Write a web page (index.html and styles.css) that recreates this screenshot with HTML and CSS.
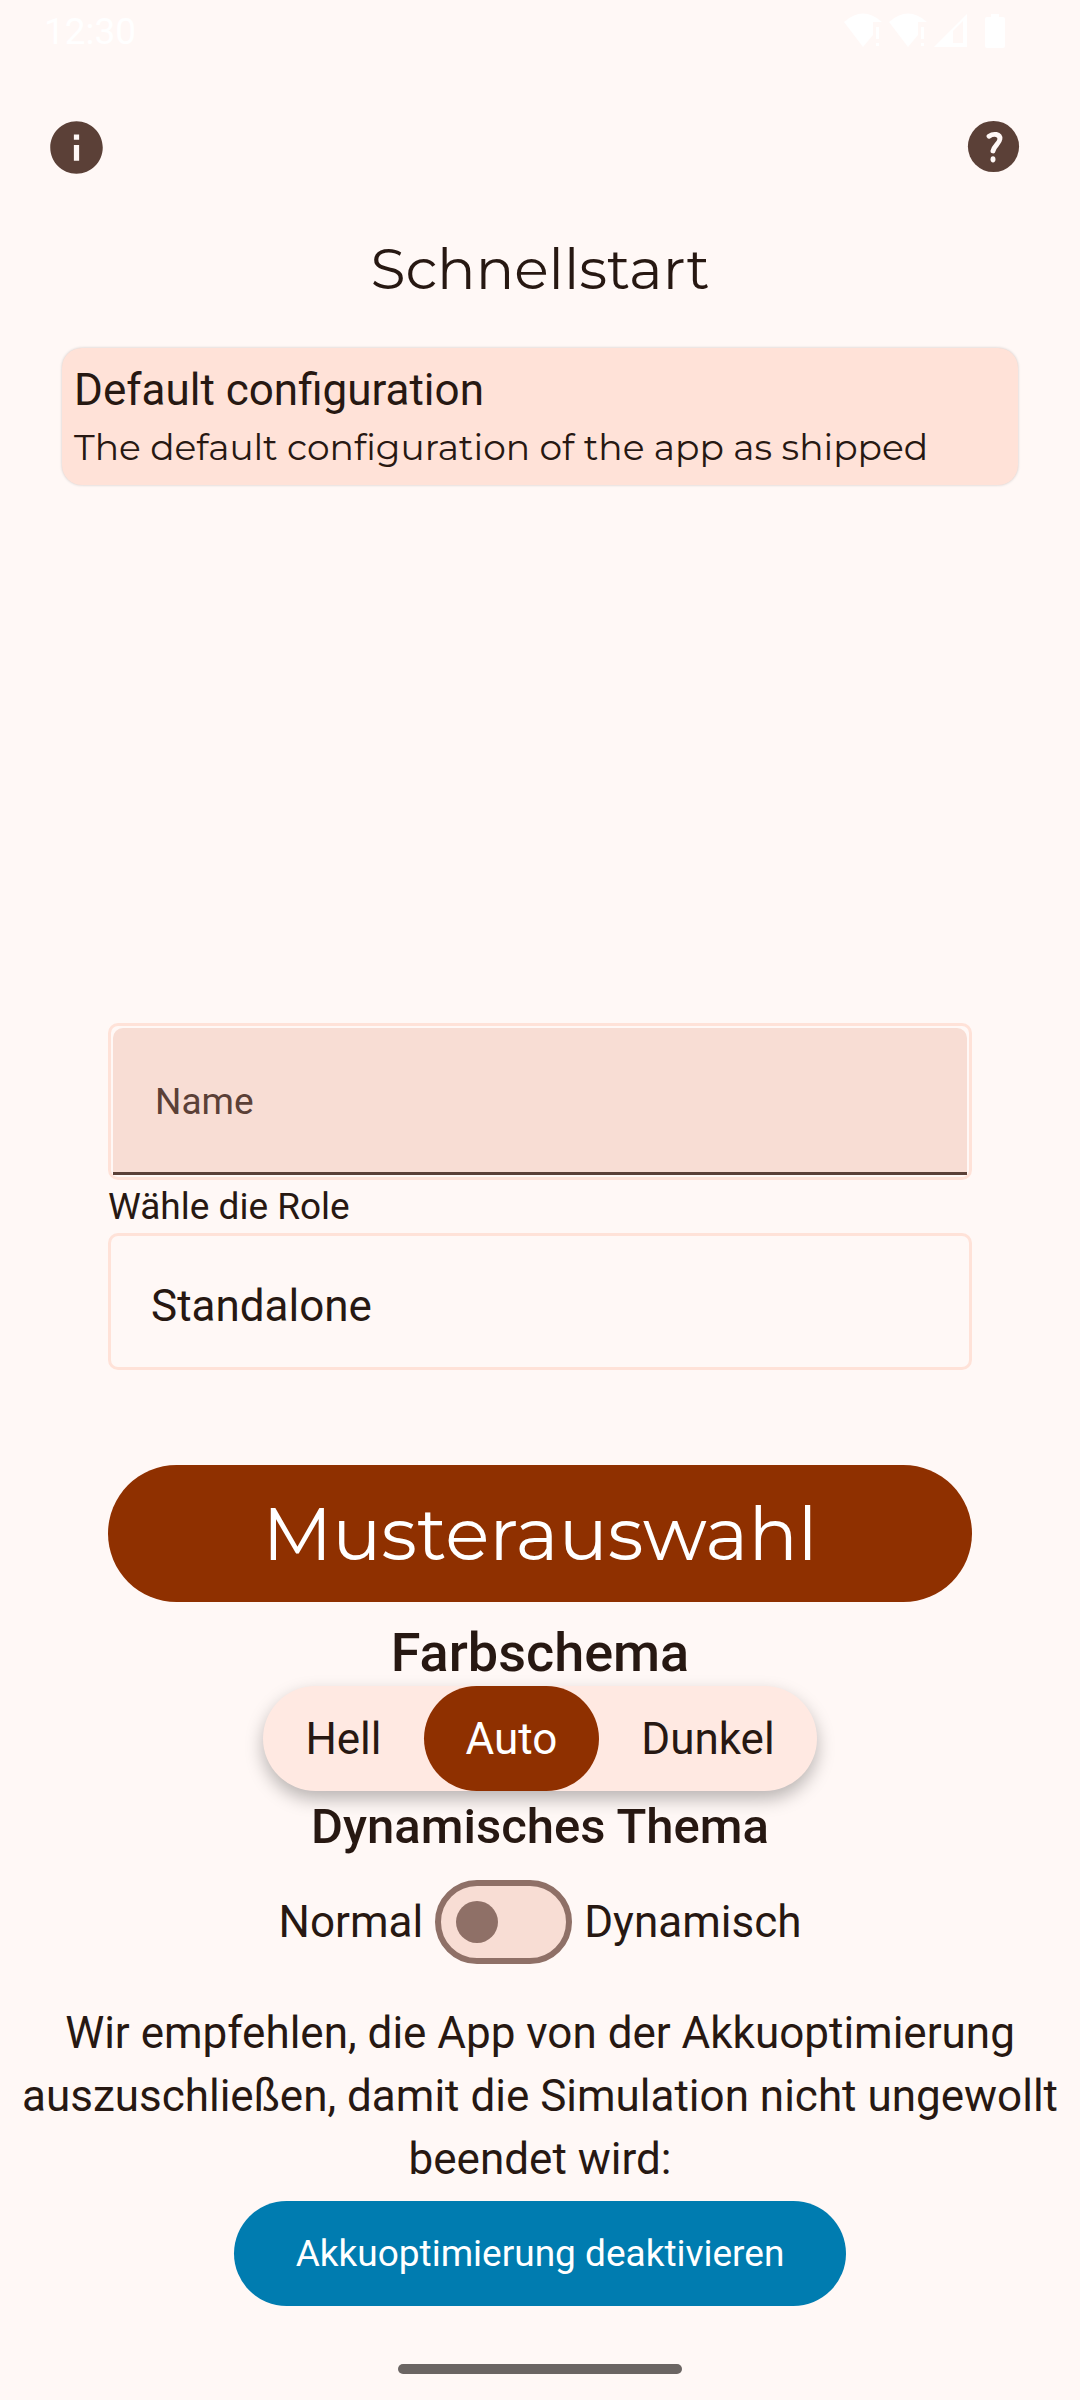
FILE: index.html
```html
<!DOCTYPE html>
<html lang="de">
<head>
<meta charset="utf-8">
<meta name="viewport" content="width=device-width, initial-scale=1">
<title>Schnellstart</title>
<link rel="stylesheet" href="styles.css">
</head>
<body>
<div class="screen">
  <header class="status">
    <span class="clock">12:30</span>
    <span class="status-icons">
      <svg class="wifi" viewBox="0 0 38 36" aria-hidden="true"><path d="M0 9Q19 -8 38 9H29V22L19 34Z"/><path d="M32 14h3v12h-3zM32 30h3v3h-3z"/></svg>
      <svg class="wifi" viewBox="0 0 38 36" aria-hidden="true"><path d="M0 9Q19 -8 38 9H29V22L19 34Z"/><path d="M32 14h3v12h-3zM32 30h3v3h-3z"/></svg>
      <svg class="signal" viewBox="0 0 34 36" aria-hidden="true"><path fill-rule="evenodd" d="M0 34L33 1V34ZM19 18V30H29V8Z"/></svg>
      <svg class="battery" viewBox="0 0 20 36" aria-hidden="true"><path d="M6 1h8v3h4q2 0 2 2v27q0 2-2 2H2q-2 0-2-2V6q0-2 2-2h4z"/></svg>
    </span>
  </header>

  <nav class="toolbar">
    <button class="icon-button" type="button" aria-label="Info">
      <svg viewBox="0 0 24 24" aria-hidden="true"><path d="M12 2C6.480 2 2 6.480 2 12s4.480 10 10 10 10-4.480 10-10S17.520 2 12 2zm1 15h-2v-6h2v6zm0-8h-2V7h2v2z"/></svg>
    </button>
    <button class="icon-button" type="button" aria-label="Hilfe">
      <svg viewBox="0 0 64 64" aria-hidden="true"><circle cx="33" cy="31" r="26"/><path class="mark" d="M28.500 20.500C33 17.500 40 18 39.500 23.500C39 28 33.500 30 32.500 35.500"/><ellipse class="dot" cx="32.500" cy="44" rx="2.500" ry="3.200"/></svg>
    </button>
  </nav>

  <main class="content">
    <h1 class="title">Schnellstart</h1>
    <section class="configs">
      <button class="config" type="button">
        <span class="config-name">Default configuration</span>
        <span class="config-text">The default configuration of the app as shipped</span>
      </button>
    </section>

    <form class="form">
      <div class="field">
        <input class="name" type="text" placeholder="Name" aria-label="Name">
      </div>
      <label class="role-label" for="role">Wähle die Role</label>
      <select class="role" id="role">
        <option>Standalone</option>
      </select>
      <button class="primary" type="button">Musterauswahl</button>
    </form>

    <fieldset class="scheme">
      <legend class="scheme-title">Farbschema</legend>
      <div class="segments">
        <label class="segment"><input type="radio" name="scheme">Hell</label>
        <label class="segment"><input type="radio" name="scheme" checked>Auto</label>
        <label class="segment"><input type="radio" name="scheme">Dunkel</label>
      </div>
    </fieldset>

    <h2 class="theme-title">Dynamisches Thema</h2>
    <div class="theme">
      <span>Normal</span>
      <input class="switch" id="dynamic" type="checkbox" role="switch">
      <label for="dynamic">Dynamisch</label>
    </div>

    <p class="advice">Wir empfehlen, die App von der Akkuoptimierung auszuschließen, damit die Simulation nicht ungewollt beendet wird:</p>
    <button class="battery-button" type="button">Akkuoptimierung deaktivieren</button>
  </main>

  <footer class="gesture"><span class="handle"></span></footer>
</div>
</body>
</html>
```

FILE: styles.css
```css
:root {
  --surface: #fff8f6;
  --ink: #271812;
  --brown: #5b4037;
  --primary: #8f3000;
  --peach: #ffe2d8;
  --fill: #f8ddd4;
  --outline: #8f7067;
  --display: Montserrat, Inter, sans-serif;
}

* {
  box-sizing: border-box;
}

body {
  margin: 0;
  background: var(--surface);
  color: var(--ink);
  font-family: Roboto, "Noto Sans", sans-serif;
  font-size: 44px;
}

button,
input,
select {
  margin: 0;
  border: 0;
  font: inherit;
  color: inherit;
}

.screen {
  display: flex;
  flex-direction: column;
  min-height: 100vh;
}

.status {
  display: flex;
  justify-content: space-between;
  align-items: center;
  height: 62px;
  padding: 0 75px 0 44px;
  color: #fff;
  font-size: 37px;
}

.status-icons {
  display: flex;
  gap: 7px;
}

.status-icons svg {
  height: 36px;
  fill: #fff;
}

.wifi {
  width: 38px;
}

.signal {
  width: 34px;
}

.battery {
  width: 20px;
  margin-left: 10px;
}

.toolbar {
  display: flex;
  justify-content: space-between;
  padding: 54px 56px 0 45px;
}

.icon-button {
  width: 63px;
  height: 63px;
  padding: 0;
  background: none;
}

.icon-button svg {
  display: block;
  width: 63px;
  height: 63px;
  fill: var(--brown);
}

.icon-button .mark {
  fill: none;
  stroke: var(--surface);
  stroke-width: 5;
  stroke-linecap: round;
}

.icon-button .dot {
  fill: var(--surface);
}

.content {
  flex: 1;
  display: flex;
  flex-direction: column;
  align-items: center;
}

.title {
  margin: 50px 0 0;
  font: 400 57px/80px var(--display);
}

.configs {
  flex: 1;
  width: 100%;
  padding: 39px 62px 0;
}

.config {
  display: flex;
  flex-direction: column;
  width: 100%;
  padding: 11px 12px;
  border-radius: 20px;
  background: var(--peach);
  box-shadow: 0 0 3px rgba(0, 0, 0, 0.2);
  text-align: left;
}

.config-name {
  line-height: 62px;
}

.config-text {
  font: 400 36px/53px var(--display);
}

.form {
  display: flex;
  flex-direction: column;
  width: 80%;
}

.field {
  padding: 2px;
  border: 3px solid var(--peach);
  border-radius: 10px;
}

.name {
  display: block;
  width: 100%;
  height: 147px;
  padding: 2px 42px 0;
  border-bottom: 3px solid var(--brown);
  border-radius: 10px 10px 0 0;
  background: var(--fill);
  font-size: 37px;
}

.name::placeholder {
  color: var(--brown);
  opacity: 1;
}

.role-label {
  font-size: 37px;
  line-height: 53px;
}

.role {
  appearance: none;
  height: 137px;
  padding: 8px 40px 0;
  border: 3px solid var(--peach);
  border-radius: 10px;
  background: transparent;
}

.primary {
  height: 137px;
  margin-top: 95px;
  border-radius: 69px;
  background: var(--primary);
  color: #fff;
  font: 400 73px/90px var(--display);
}

.scheme {
  display: flex;
  flex-direction: column;
  align-items: center;
  margin: 0;
  padding: 0;
  border: 0;
}

.scheme-title {
  margin: 0 auto;
  padding: 18px 0 0;
  font-size: 54px;
  font-weight: 500;
  line-height: 66px;
}

.segments {
  display: flex;
  border-radius: 53px;
  background: #ffe9e2;
  box-shadow: 0 8px 18px rgba(0, 0, 0, 0.28);
}

.segment {
  display: flex;
  align-items: center;
  height: 105px;
  padding: 0 42px;
  border-radius: 53px;
}

.segment input {
  position: absolute;
  opacity: 0;
}

.segment:has(input:checked) {
  background: var(--primary);
  color: #fff;
}

.theme-title {
  position: relative;
  margin: 0;
  font-size: 49px;
  font-weight: 500;
  line-height: 72px;
}

.theme {
  display: flex;
  align-items: center;
  gap: 12px;
  margin-top: 17px;
}

.switch {
  appearance: none;
  display: flex;
  align-items: center;
  width: 137px;
  height: 84px;
  padding: 0 15px;
  border: 6px solid var(--outline);
  border-radius: 42px;
  background: var(--fill);
}

.switch::before {
  content: "";
  width: 42px;
  height: 42px;
  border-radius: 50%;
  background: var(--outline);
}

.switch:checked {
  justify-content: flex-end;
}

.advice {
  margin: 38px 0 0;
  padding: 0 10px;
  line-height: 63px;
  text-align: center;
}

.battery-button {
  height: 105px;
  margin-top: 10px;
  padding: 0 62px;
  border-radius: 53px;
  background: #007cb0;
  color: #fff;
  font-size: 37px;
}

.gesture {
  display: flex;
  justify-content: center;
  padding: 58px 0 26px;
}

.handle {
  width: 284px;
  height: 10px;
  border-radius: 5px;
  background: #6b6563;
}
```
